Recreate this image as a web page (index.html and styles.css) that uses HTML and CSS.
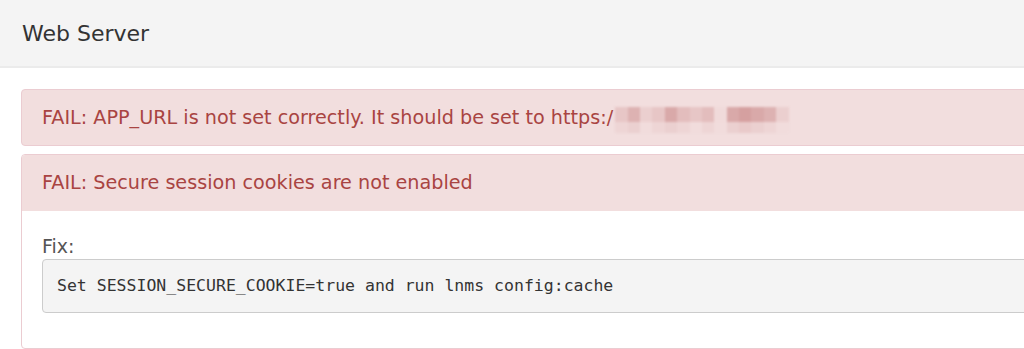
FILE: index.html
```html
<html>
    <head>
        <link rel="stylesheet" href="styles.css">
    </head>
    <body>
        <div class="panel-outer">
            <div class="outer-heading">Web Server</div>
            <div class="outer-body">
                <div class="alert">
                    FAIL: APP_URL is not set correctly. It should be set to https:/<span class="redacted">
                        <span class="row top"><i class="c2"></i><i class="c4"></i><i class="c1"></i><i class="c2"></i><i class="c5"></i><i class="c3"></i><i class="c2"></i><i class="c3"></i><i class="c0"></i><i class="c5"></i><i class="c6"></i><i class="c5"></i><i class="c4"></i><i class="c1"></i></span>
                        <span class="row bottom"><i class="c1"></i><i class="c2"></i><i class="c0"></i><i class="c1"></i><i class="c2"></i><i class="c1"></i><i class="c0"></i><i class="c1"></i><i class="c0"></i><i class="c2"></i><i class="c3"></i><i class="c2"></i><i class="c1"></i><i class="c0"></i></span>
                    </span>
                </div>
                <div class="panel-danger">
                    <div class="danger-heading">FAIL: Secure session cookies are not enabled</div>
                    <div class="danger-body">
                        <div class="fix-label">Fix:</div>
                        <pre class="fix-code">Set SESSION_SECURE_COOKIE=true and run lnms config:cache</pre>
                    </div>
                </div>
            </div>
        </div>
    </body>
</html>
```
FILE: styles.css
```css
body {
    margin: 0;
    overflow: hidden;
    background: #fff;
    font-family: "DejaVu Sans", Verdana, sans-serif;
    color: #333;
}

.panel-outer {
    width: 1080px;
}

.outer-heading {
    background: #f4f4f4;
    border-bottom: 2px solid #ebebeb;
    height: 68px;
    box-sizing: border-box;
    padding: 19px 22px 0;
    font-size: 22px;
    line-height: 30px;
    color: #333;
}

.outer-body {
    padding: 21px 0 0 21px;
}

.alert {
    background: #f2dede;
    border: 1px solid #ebccd1;
    border-radius: 4px;
    color: #a94442;
    height: 57px;
    box-sizing: border-box;
    padding: 0 20px;
    font-size: 19.2px;
    line-height: 26px;
    margin-bottom: 8px;
    display: flex;
    align-items: center;
    white-space: nowrap;
}

/* pixelated url */
.redacted {
    display: inline-flex;
    flex-direction: column;
    margin-left: 2px;
    margin-top: 4px;
    filter: blur(0.8px);
}
.redacted .row {
    display: flex;
}
.redacted .top i {
    height: 15px;
}
.redacted .bottom i {
    height: 11px;
}
.redacted i {
    display: block;
    width: 12.4px;
}
.redacted .bottom {
    opacity: 0.6;
}
.redacted .c0 { background: #f0dada; }
.redacted .c1 { background: #ebcfcf; }
.redacted .c2 { background: #e7c6c6; }
.redacted .c3 { background: #e3bdbd; }
.redacted .c4 { background: #ddb2b2; }
.redacted .c5 { background: #d9a9a9; }
.redacted .c6 { background: #d5a0a0; }

.panel-danger {
    border: 1px solid #ebccd1;
    border-radius: 4px;
    height: 195px;
    box-sizing: border-box;
}

.danger-heading {
    background: #f2dede;
    color: #a94442;
    height: 56px;
    box-sizing: border-box;
    padding: 15px 20px;
    font-size: 19.2px;
    line-height: 26px;
    border-radius: 3px 3px 0 0;
}

.danger-body {
    padding: 22px 20px 0;
}

.fix-label {
    font-size: 19px;
    line-height: 26px;
    color: #555;
}

.fix-code {
    margin: 0;
    background: #f4f4f4;
    border: 1px solid #ccc;
    border-radius: 4px;
    height: 54px;
    box-sizing: border-box;
    padding: 14px 14px;
    font-family: "DejaVu Sans Mono", monospace;
    font-size: 16.5px;
    line-height: 24px;
    color: #333;
}
```
